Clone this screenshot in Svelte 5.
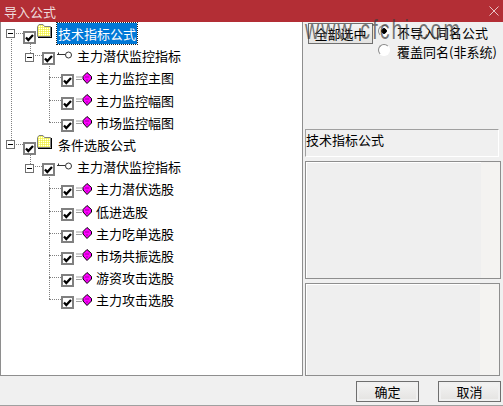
<script>
  const tree = [
    { label: "技术指标公式", level: 0, kind: "folder", selected: true, expander: true },
    { label: "主力潜伏监控指标", level: 1, kind: "key", expander: true },
    { label: "主力监控主图", level: 2, kind: "gem" },
    { label: "主力监控幅图", level: 2, kind: "gem" },
    { label: "市场监控幅图", level: 2, kind: "gem" },
    { label: "条件选股公式", level: 0, kind: "folder", expander: true },
    { label: "主力潜伏监控指标", level: 1, kind: "key", expander: true },
    { label: "主力潜伏选股", level: 2, kind: "gem" },
    { label: "低进选股", level: 2, kind: "gem" },
    { label: "主力吃单选股", level: 2, kind: "gem" },
    { label: "市场共振选股", level: 2, kind: "gem" },
    { label: "游资攻击选股", level: 2, kind: "gem" },
    { label: "主力攻击选股", level: 2, kind: "gem" },
  ];
</script>

<div class="dialog">
  <div class="titlebar">
    <span>导入公式</span>
    <svg class="close" width="10" height="10" viewBox="0 0 10 10">
      <path d="M0.5 0.5L9.5 9.5M9.5 0.5L0.5 9.5" stroke="#e8c4c6" fill="none" />
    </svg>
  </div>

  <div class="main">
    <div class="tree">
      <svg width="0" height="0" class="defs">
        <defs>
          <pattern id="dither" width="2" height="2" patternUnits="userSpaceOnUse">
            <rect width="2" height="2" fill="#ffff66" />
            <rect width="1" height="1" fill="#fff" />
            <rect x="1" y="1" width="1" height="1" fill="#e8e860" />
          </pattern>
        </defs>
      </svg>
      {#each tree as node}
        <div class={`row level${node.level}`}>
          {#if node.expander}
            <span class="expander"></span>
          {/if}
          <span class="check">
            <svg width="9" height="9" viewBox="0 0 9 9">
              <path d="M1 4.5L3.3 7L8 2" stroke="#000" stroke-width="2.3" fill="none" />
            </svg>
          </span>
          {#if node.kind === "folder"}
            <svg class="icon-folder" width="15" height="14" viewBox="0 0 15 14">
              <path d="M0.5 12.5V2.5L2 0.5H6L7.5 2.5H13.5V12.5Z" fill="url(#dither)" stroke="#808080" />
              <path d="M1 13.5H15M14.5 3V13.5" stroke="#000" />
            </svg>
          {:else if node.kind === "key"}
            <svg class="icon-key" width="16" height="8" viewBox="0 0 16 8">
              <circle cx="11.5" cy="4" r="3" fill="#fff" stroke="#333" />
              <path d="M0 3.5H8M1.5 3.5V1.5" stroke="#333" fill="none" />
            </svg>
          {:else}
            <svg class="icon-gem" width="16" height="12" viewBox="0 0 16 12">
              <path d="M0 5H6M0 7.5H6" stroke="#a0a0a0" fill="none" />
              <path d="M11 0.5L15.5 4.5V7L11 11.5L7 7V4.5Z" fill="#ff00ff" stroke="#000" />
              <path d="M9 5L13 5M10 8L12 8" stroke="#a000a0" fill="none" />
            </svg>
          {/if}
          <span class="label" class:selected={node.selected}>{node.label}</span>
        </div>
      {/each}
    </div>

    <div class="side">
      <div class="options">
        <button class="btn select-all">全部选中</button>
        <div class="radios">
          <label><span class="radio on"></span>不导入同名公式</label>
          <label><span class="radio"></span>覆盖同名(非系统)</label>
        </div>
      </div>
      <div class="caption">技术指标公式</div>
      <div class="box one"><div class="edge"></div></div>
      <div class="box two"><div class="edge"></div></div>
    </div>
  </div>

  <div class="footer">
    <button class="btn action">确定</button>
    <button class="btn action">取消</button>
  </div>

  <div class="watermark">www.cfchi.com</div>
</div>

<style>
  :global(body) {
    margin: 0;
  }

  .dialog {
    width: 503px;
    height: 406px;
    position: relative;
    overflow: hidden;
    box-sizing: border-box;
    display: flex;
    flex-direction: column;
    background: #f0f0f0;
    border-bottom: 1px solid #a0a0a0;
    font-family: "Noto Sans CJK SC", "Liberation Sans", sans-serif;
    font-size: 13px;
    color: #000;
  }

  .titlebar {
    height: 22px;
    flex: none;
    display: flex;
    align-items: center;
    justify-content: space-between;
    padding: 0 3px 0 4px;
    background: #b32e35;
    color: #eedcdc;
  }

  .close {
    margin-right: 1px;
  }

  .main {
    height: 354px;
    flex: none;
    display: flex;
  }

  .tree {
    width: 303px;
    flex: none;
    box-sizing: border-box;
    padding-top: 1px;
    background: #fff;
    border: 1px solid #8e8e8e;
    border-top: none;
  }

  .defs {
    position: absolute;
  }

  .row {
    height: 22.2px;
    display: flex;
    align-items: center;
    position: relative;
    white-space: nowrap;
  }

  .level0 {
    padding-left: 22px;
  }

  .level1 {
    padding-left: 41px;
  }

  .level2 {
    padding-left: 60px;
  }

  /* dotted connectors of the tree */
  .row::before {
    content: "";
    position: absolute;
    top: 10px;
    height: 0;
    border-top: 1px dotted #808080;
  }

  .level0::before {
    left: 10px;
    width: 12px;
  }

  .level1::before {
    left: 29px;
    width: 12px;
  }

  .level2::before {
    left: 48px;
    width: 12px;
  }

  .level2::after {
    content: "";
    position: absolute;
    left: 48px;
    top: -12px;
    height: 22px;
    border-left: 1px dotted #808080;
  }

  .level1::after {
    content: "";
    position: absolute;
    left: 29px;
    top: -4px;
    height: 12px;
    border-left: 1px dotted #808080;
  }

  .level0:first-of-type::after {
    content: "";
    position: absolute;
    left: 10px;
    top: 10px;
    height: 111px;
    border-left: 1px dotted #808080;
  }

  .expander {
    position: absolute;
    z-index: 1;
    width: 7px;
    height: 7px;
    border: 1px solid #707070;
    background: linear-gradient(#000, #000) center / 5px 1px no-repeat #fff;
  }

  .level0 .expander {
    left: 5px;
    top: 6px;
  }

  .level1 .expander {
    left: 24px;
    top: 8px;
  }

  .check {
    width: 9px;
    height: 9px;
    flex: none;
    display: flex;
    align-items: center;
    justify-content: center;
    margin-top: 5px;
    border: 2px solid #808080;
    background: #fff;
    position: relative;
    z-index: 1;
  }

  .level0 .check {
    margin-top: 7px;
  }

  .icon-folder {
    margin: -7px 0 0 1px;
    flex: none;
  }

  .icon-key {
    margin: -2px 0 0 2px;
    flex: none;
  }

  .icon-gem {
    margin: -1px 0 0 2px;
    flex: none;
  }

  .label {
    margin-left: 3px;
    padding: 0 1px;
    line-height: 21px;
    margin-top: -1px;
  }

  .level0 .label {
    margin-left: 5px;
  }

  .selected {
    background: #0078d7;
    color: #fff;
    outline: 1px dotted #222;
  }

  .side {
    flex: 1;
    min-width: 0;
    box-sizing: border-box;
    padding: 1px 2px 0 2px;
    display: flex;
    flex-direction: column;
  }

  .options {
    height: 106px;
    flex: none;
    display: flex;
    align-items: flex-start;
    padding-left: 3px;
    box-sizing: border-box;
  }

  .btn {
    box-sizing: border-box;
    padding: 0;
    font: inherit;
    color: #000;
    border: 1px solid #6f6f6f;
    background: linear-gradient(#f4f4f4, #e4e3e1);
  }

  .select-all {
    width: 65px;
    height: 21px;
    flex: none;
    line-height: 17px;
  }

  .radios {
    margin-left: 5px;
    display: flex;
    flex-direction: column;
    white-space: nowrap;
  }

  .radios label {
    height: 19px;
    display: flex;
    align-items: center;
    gap: 7px;
    line-height: 19px;
  }

  .radio {
    width: 12px;
    height: 12px;
    margin-top: -3px;
    box-sizing: border-box;
    border-radius: 50%;
    border: 1px solid #8a8a8a;
    border-right-color: #fff;
    border-bottom-color: #fff;
    background: #fff;
    flex: none;
  }

  .radio.on {
    background: radial-gradient(circle, #000 0 2.5px, #fff 3px);
  }

  .caption {
    width: 194px;
    height: 28px;
    flex: none;
    box-sizing: border-box;
    margin-bottom: 4px;
    border: 1px solid;
    border-color: #a0a0a0 #fff #fff #a0a0a0;
    line-height: 20px;
  }

  .box {
    flex: none;
    box-sizing: border-box;
    display: flex;
    justify-content: flex-end;
    background: #efefef;
    border: 1px solid #8e8e8e;
    box-shadow: inset 1px 1px 0 #fff;
  }

  .one {
    width: 196px;
    height: 118px;
    margin-bottom: 4px;
  }

  .two {
    width: 195px;
    height: 93px;
  }

  .edge {
    width: 19px;
    background: #f4f3f1;
  }

  .footer {
    flex: 1;
    display: flex;
    justify-content: flex-end;
    gap: 19px;
    padding: 5px 2px 0 0;
  }

  .action {
    width: 63px;
    height: 21px;
    line-height: 17px;
    box-shadow: inset 0 0 0 2px #f0f0f0;
  }

  .watermark {
    position: absolute;
    left: 305px;
    top: 14px;
    z-index: 5;
    font-family: "Liberation Sans", sans-serif;
    font-size: 28px;
    line-height: 32px;
    letter-spacing: 3px;
    color: rgba(60, 60, 60, 0.7);
    white-space: nowrap;
    transform: scaleX(0.7);
    transform-origin: left center;
    pointer-events: none;
  }
</style>
